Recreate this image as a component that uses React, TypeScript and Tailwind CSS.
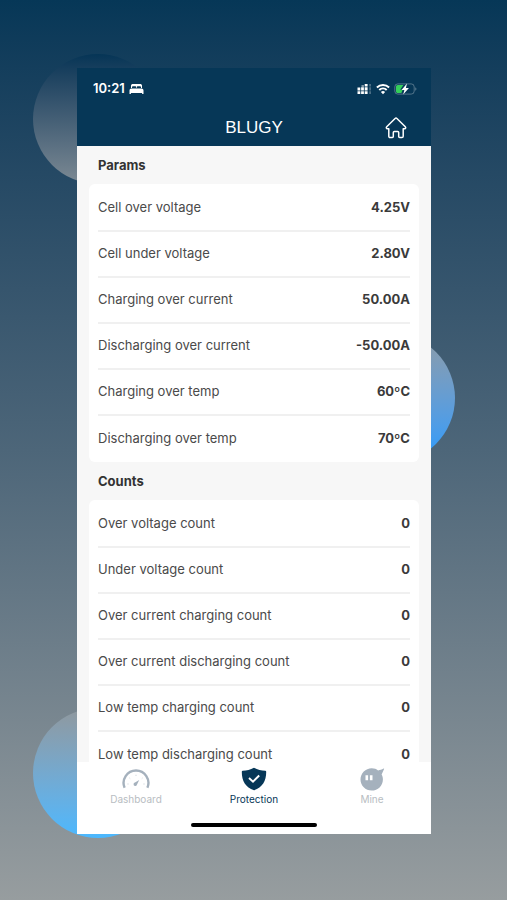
import { clsx } from "clsx";

type Reading = {
  label: string;
  value: string;
};

type SectionProps = {
  title: string;
  readings: Reading[];
};

const params: Reading[] = [
  { label: "Cell over voltage", value: "4.25V" },
  { label: "Cell under voltage", value: "2.80V" },
  { label: "Charging over current", value: "50.00A" },
  { label: "Discharging over current", value: "-50.00A" },
  { label: "Charging over temp", value: "60ºC" },
  { label: "Discharging over temp", value: "70ºC" },
];

const counts: Reading[] = [
  { label: "Over voltage count", value: "0" },
  { label: "Under voltage count", value: "0" },
  { label: "Over current charging count", value: "0" },
  { label: "Over current discharging count", value: "0" },
  { label: "Low temp charging count", value: "0" },
  { label: "Low temp discharging count", value: "0" },
];

const BedIcon = () => (
  <svg width="15" height="12" viewBox="0 0 15 12" fill="currentColor">
    <path d="M2 5V2.6C2 1.4 2.8.9 3.8.9h7.4c1 0 1.8.5 1.8 1.7V5h-1V4.1c0-.6-.4-.9-.9-.9H8.6c-.5 0-.8.3-.8.9V5h-.6V4.1c0-.6-.3-.9-.8-.9H3.9c-.5 0-.9.3-.9.9V5z" />
    <path d="M.5 7.400C.5 6.200 1.300 5.400 2.400 5.400h10.200c1.100 0 1.900.8 1.900 2V11h-1.400V9.900H1.900V11H.5z" />
  </svg>
);

const SignalIcon = () => (
  <svg width="15" height="12" viewBox="0 0 15 12" fill="currentColor">
    <path d="M.5 8.300h2.800V11H.5zM4.100 8.300h2.800V11H4.100zM7.700 8.300h2.900V11H7.700zM.5 4.600h2.800v2.900H.5zM4.100 4.200h2.800v3.300H4.100zM7.700 4.200h2.900v3.300H7.700zM4.500 2.400h2.400v1H4.500zM7.700 1h2.900v2.400H7.700z" />
    <path d="M12.200 1h1.800v2.400h-1.800zM12.200 4.200h1.800v3.300h-1.800zM12.200 8.300h1.800V11h-1.800z" opacity=".28" />
  </svg>
);

const WifiIcon = () => (
  <svg width="14" height="12" viewBox="0 0 14 12" fill="none" stroke="currentColor" strokeWidth="2">
    <path d="M.9 4.500a8.800 8.800 0 0 1 12.200 0" />
    <path d="M3.300 7a5.300 5.300 0 0 1 7.400 0" />
    <path d="M7 11.200 4.900 9.100a3 3 0 0 1 4.200 0z" fill="currentColor" stroke="none" />
  </svg>
);

const BatteryIcon = () => (
  <svg width="23" height="12" viewBox="0 0 23 12" fill="none">
    <rect x=".8" y=".9" width="19.400" height="10.200" rx="3" stroke="#fff" strokeOpacity=".3" />
    <path d="M21.400 4.200c1.300.6 1.300 3 0 3.600z" fill="#fff" fillOpacity=".4" />
    <path d="M3.800 2h5.600L6.200 6.700h2.500L7.400 10H3.800c-1 0-1.800-.8-1.800-1.800V3.800C2 2.800 2.800 2 3.800 2z" fill="#35cf5b" />
    <path d="M13 .6 7.500 6.900h2.900L9.200 11.600l5.700-6.500h-3z" fill="#fff" />
  </svg>
);

const HomeIcon = () => (
  <svg
    width="22"
    height="22"
    viewBox="0 0 22 22"
    fill="none"
    stroke="currentColor"
    strokeWidth="1.500"
    strokeLinejoin="round"
    strokeLinecap="round"
  >
    <path d="M10.100 1.500a1.300 1.300 0 0 1 1.800 0l8.400 8.300c.7.700.4 1.900-.7 1.900h-1.400v7.600c0 .9-.5 1.300-1.300 1.300h-2.200c-.6 0-1-.4-1-1v-4.100c0-.7-.4-1.100-1-1.100H9.300c-.6 0-1 .4-1 1.100v4.100c0 .6-.4 1-1 1H5.100c-.8 0-1.300-.4-1.300-1.300v-7.600H2.400c-1.100 0-1.400-1.200-.7-1.900z" />
  </svg>
);

const GaugeIcon = () => (
  <svg width="28" height="24" viewBox="0 0 28 24" fill="none">
    <path d="M2.600 20.800A12.400 12.400 0 1 1 25.400 20.800" stroke="#a5b1bd" strokeWidth="2.400" />
    <path
      d="M5.500 17h1M7.500 11l.7.600M14 7.800v1M20.500 11l-.7.600M22.500 17h-1"
      stroke="#c3cbd3"
      strokeWidth=".9"
    />
    <path d="m17.200 12.900-2.300 4.800a1.700 1.700 0 1 1-1.900-2.100z" fill="#a5b1bd" />
  </svg>
);

const ShieldIcon = () => (
  <svg width="28" height="24" viewBox="0 0 28 24" fill="none">
    <path
      d="M14 .8c3.600 1.900 7.300 2.800 11.300 3 .6 0 .9.4.9.9C26.300 14 22.500 20.200 14 23.300 5.500 20.200 1.700 14 1.800 4.700c0-.5.3-.9.900-.9C6.700 3.600 10.400 2.700 14 .8z"
      fill="#063757"
    />
    <path d="m9 11 4 3.700 6.200-6.200" stroke="#fff" strokeWidth="1.900" />
  </svg>
);

const MineIcon = () => (
  <svg width="28" height="24" viewBox="0 0 28 24" fill="none">
    <path
      d="M13.700 1.200c2.700 0 4.700.8 6.400 2.200 2-.3 3.600-.8 5.500-1.800.4-.2.700.1.500.5l-2.500 5.500c.8 1.400 1.300 3.200 1.300 4.800 0 6.200-5 11.100-11.200 11.100S2.500 18.500 2.500 12.400 7.500 1.200 13.700 1.200z"
      fill="#a5b1bd"
    />
    <path d="M8.800 8.200v5M13.200 8.200v5" stroke="#fff" strokeWidth="2.600" />
  </svg>
);

const tabs = [
  { name: "Dashboard", Icon: GaugeIcon },
  { name: "Protection", Icon: ShieldIcon },
  { name: "Mine", Icon: MineIcon },
];

const Section = ({ title, readings }: SectionProps) => (
  <section>
    <h2 className="px-[9px] py-2 text-[13px] leading-[22px] font-bold text-[#333]">
      {title}
    </h2>
    <dl className="rounded-md bg-white px-[9px] pt-0.5">
      {readings.map((reading) => (
        <div
          key={reading.label}
          className="flex h-[46px] items-center justify-between border-b-2 border-[#f0f0f0] text-[13px] last:border-b-0"
        >
          <dt className="text-[#4a4a4a]">{reading.label}</dt>
          <dd className="font-bold text-[#3a3a3a]">{reading.value}</dd>
        </div>
      ))}
    </dl>
  </section>
);

const Backdrop = () => (
  <div className="absolute inset-0 overflow-hidden">
    <div className="absolute top-[54px] left-[33px] h-[130px] w-[130px] rounded-full bg-linear-to-b from-[#053556] to-[#7d8a94]" />
    <div className="absolute top-[333px] right-[52px] h-[130px] w-[130px] rounded-full bg-linear-to-b from-[#8d9ba6] to-[#1f9bff]" />
    <div className="absolute top-[708px] left-[33px] h-[130px] w-[130px] rounded-full bg-linear-to-b from-[#8f989e] to-[#4ab8ff]" />
  </div>
);

const App = () => {
  return (
    <div className="relative flex h-screen flex-col bg-linear-to-b from-[#063757] via-[#4d6679] to-[#979d9f] pt-[68px] pr-[76px] pb-[66px] pl-[77px] font-['Inter','Liberation_Sans',sans-serif]">
      <Backdrop />

      <div className="relative flex min-h-0 flex-1 flex-col bg-[#f7f7f7]">
        <header className="bg-[#063757] pt-px text-white">
          <div className="flex h-10 items-center justify-between pr-[14px] pl-4">
            <div className="flex items-center gap-1 text-[13px] font-semibold">
              10:21
              <BedIcon />
            </div>
            <div className="flex items-center gap-1">
              <SignalIcon />
              <WifiIcon />
              <BatteryIcon />
            </div>
          </div>
          <div className="grid h-[37px] grid-cols-[1fr_auto_1fr] items-center px-6">
            <h1 className="col-start-2 text-[17px] font-['Liberation_Sans',sans-serif]">
              BLUGY
            </h1>
            <button aria-label="Home" className="justify-self-end">
              <HomeIcon />
            </button>
          </div>
        </header>

        <main className="min-h-0 flex-1 overflow-y-auto px-3 [scrollbar-width:none]">
          <Section title="Params" readings={params} />
          <Section title="Counts" readings={counts} />
        </main>

        <footer className="bg-white pt-[5px] pb-[7px]">
          <nav className="grid grid-cols-3">
            {tabs.map(({ name, Icon }) => (
              <a
                key={name}
                href="#"
                className={clsx(
                  "flex flex-col items-center text-[10px] leading-4",
                  name === "Protection" ? "text-[#063757]" : "text-[#b8bdc2]"
                )}
              >
                <Icon />
                {name}
              </a>
            ))}
          </nav>
          <div className="mx-auto mt-4 h-1 w-[126px] rounded-full bg-black" />
        </footer>
      </div>
    </div>
  );
};

export default App;
